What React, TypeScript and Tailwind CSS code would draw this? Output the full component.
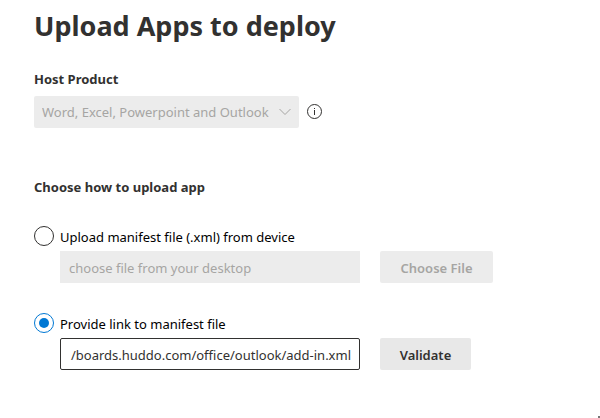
import { useState } from 'react';

const radioClass =
  "m-0 grid size-5 shrink-0 appearance-none place-content-center rounded-full border border-[#323130] bg-white before:size-2.5 before:rounded-full checked:border-[#0078d4] checked:before:bg-[#0078d4]";

export default function App() {
  const [source, setSource] = useState('link');
  const [link, setLink] = useState('/boards.huddo.com/office/outlook/add-in.xml');

  return (
    <main className="bg-white px-[34px] pt-1 font-['Noto_Sans',sans-serif] text-[13px] leading-5 text-[#323130]">
      <h1 className="text-[27px] leading-11 font-bold">Upload Apps to deploy</h1>

      <label htmlFor="host" className="mt-[21px] block font-bold">
        Host Product
      </label>
      <div className="mt-[7px] flex items-center gap-2">
        <div className="relative">
          <select
            id="host"
            disabled
            className="block h-8 w-[265px] appearance-none rounded-xs bg-[#ececec] px-2 text-[#a6a5a3] opacity-100"
          >
            <option>Word, Excel, Powerpoint and Outlook</option>
          </select>
          <svg
            viewBox="0 0 14 8"
            className="pointer-events-none absolute top-3 right-[7px] h-2 w-3.5"
            fill="none"
            stroke="#a6a5a3"
          >
            <path d="M1.5 1l5.5 5.5L12.500 1" />
          </svg>
        </div>
        <button type="button" aria-label="About host products">
          <svg viewBox="0 0 16 16" className="size-4" fill="none" stroke="#323130">
            <circle cx="7.5" cy="7.5" r="7" />
            <path d="M7.5 6v5M7.5 4v1" />
          </svg>
        </button>
      </div>

      <fieldset className="mt-[49px]">
        <legend className="font-bold">Choose how to upload app</legend>

        <div className="mt-[29px] flex items-center gap-1.5 text-black">
          <input
            id="device"
            type="radio"
            name="source"
            checked={source === 'device'}
            onChange={() => setSource('device')}
            className={radioClass}
          />
          <label htmlFor="device" className="-mb-0.5">Upload manifest file (.xml) from device</label>
        </div>
        <div className="mt-[5px] flex gap-5 pl-[26px]">
          <input
            type="text"
            disabled
            aria-label="Manifest file"
            placeholder="choose file from your desktop"
            className="h-8 w-[300px] bg-[#ececec] px-[9px] pt-0.5 placeholder:text-[#a6a5a3]"
          />
          <button type="button" disabled className="h-8 w-[113px] rounded-xs bg-[#ececec] pt-0.5 font-semibold text-[#a6a5a3]">
            Choose File
          </button>
        </div>

        <div className="mt-[30px] flex items-center gap-1.5 text-black">
          <input
            id="link"
            type="radio"
            name="source"
            checked={source === 'link'}
            onChange={() => setSource('link')}
            className={radioClass}
          />
          <label htmlFor="link" className="-mb-0.5">Provide link to manifest file</label>
        </div>
        <div className="mt-[5px] flex gap-5 pl-[26px]">
          <input
            type="text"
            aria-label="Manifest link"
            value={link}
            onChange={(e) => setLink(e.target.value)}
            className="h-8 w-[300px] rounded-xs border border-[#323130] bg-white px-2 pt-0.5 text-right"
          />
          <button type="button" className="h-8 w-[91px] rounded-xs bg-[#e8e8e8] pt-0.5 font-semibold">
            Validate
          </button>
        </div>
      </fieldset>
      <span className="fixed right-0 bottom-0 size-0.5 bg-[#777777]" />
    </main>
  );
}
